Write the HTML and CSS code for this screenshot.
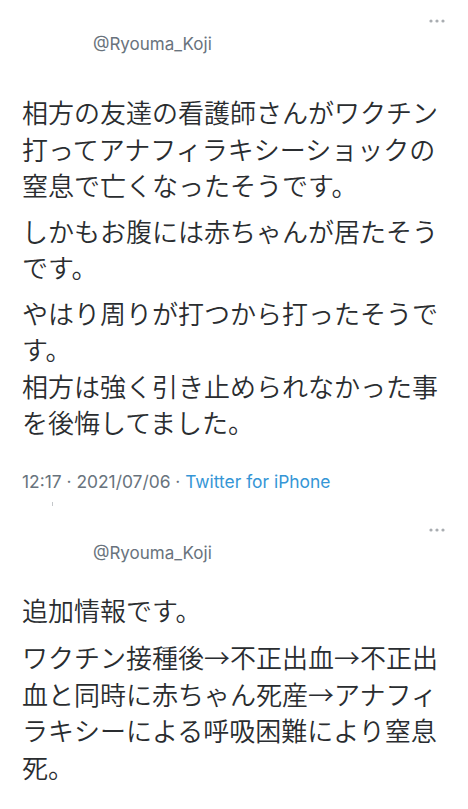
FILE: index.html
```html
<!DOCTYPE html>
<html lang="ja">
<head>
<meta charset="utf-8">
<link rel="stylesheet" href="styles.css">
</head>
<body>
<article class="tweet tweet-first">
  <div class="more-row">
    <svg class="more" width="16" height="4" viewBox="0 0 16 4"><circle cx="2" cy="2" r="1.6"/><circle cx="8" cy="2" r="1.6"/><circle cx="14" cy="2" r="1.6"/></svg>
  </div>
  <div class="handle">@Ryouma_Koji</div>
  <div class="body">
    <p>相方の友達の看護師さんがワクチン打ってアナフィラキシーショックの窒息で亡くなったそうです。</p>
    <p>しかもお腹には赤ちゃんが居たそうです。</p>
    <p>やはり周りが打つから打ったそうです。<br>相方は強く引き止められなかった事を後悔してました。</p>
  </div>
  <div class="meta">12:17 · 2021/07/06 · <span class="source">Twitter for iPhone</span></div>
  <div class="tick"></div>
</article>
<article class="tweet tweet-second">
  <div class="more-row">
    <svg class="more" width="16" height="4" viewBox="0 0 16 4"><circle cx="2" cy="2" r="1.6"/><circle cx="8" cy="2" r="1.6"/><circle cx="14" cy="2" r="1.6"/></svg>
  </div>
  <div class="handle">@Ryouma_Koji</div>
  <div class="body">
    <p>追加情報です。</p>
    <p>ワクチン接種後→不正出血→不正出血と同時に赤ちゃん死産→アナフィラキシーによる呼吸困難により窒息死。</p>
  </div>
</article>
</body>
</html>
```
FILE: styles.css
```css
html, body {
  margin: 0;
  padding: 0;
  background: #ffffff;
}

body {
  width: 468px;
  height: 809px;
  overflow: hidden;
  font-family: "Inter", "Noto Sans CJK JP", sans-serif;
}

.tweet {
  padding: 0 28px 0 22px;
  display: flex;
  flex-direction: column;
}

.tweet-first {
  padding-top: 19px;
}

.tweet-second {
  padding-top: 22px;
}

.more-row {
  display: flex;
  justify-content: flex-end;
  height: 4px;
  margin-right: -5px;
}

.more {
  fill: #a9adb1;
  display: block;
}

.handle {
  margin-top: 10px;
  margin-left: 71px;
  font-size: 17px;
  line-height: 22px;
  color: #69737d;
}

.body {
  margin-top: 39px;
  font-family: "Noto Sans CJK JP", sans-serif;
  font-size: 26px;
  font-weight: 350;
  line-height: 36.5px;
  color: #2a2d30;
}

.tweet-second .body {
  margin-top: 28px;
}

.tweet-second .body p {
  margin-bottom: 11px;
}

.body p {
  margin: 0 0 9px 0;
}

.body p:last-child {
  margin-bottom: 0;
}

.meta {
  margin-top: 31px;
  font-size: 17.4px;
  line-height: 20px;
  color: #68737d;
}

.source {
  color: #3596d6;
}

.tick {
  margin: 10px 0 0 30px;
  width: 1px;
  height: 4px;
  background: #c4c7ca;
}
```
